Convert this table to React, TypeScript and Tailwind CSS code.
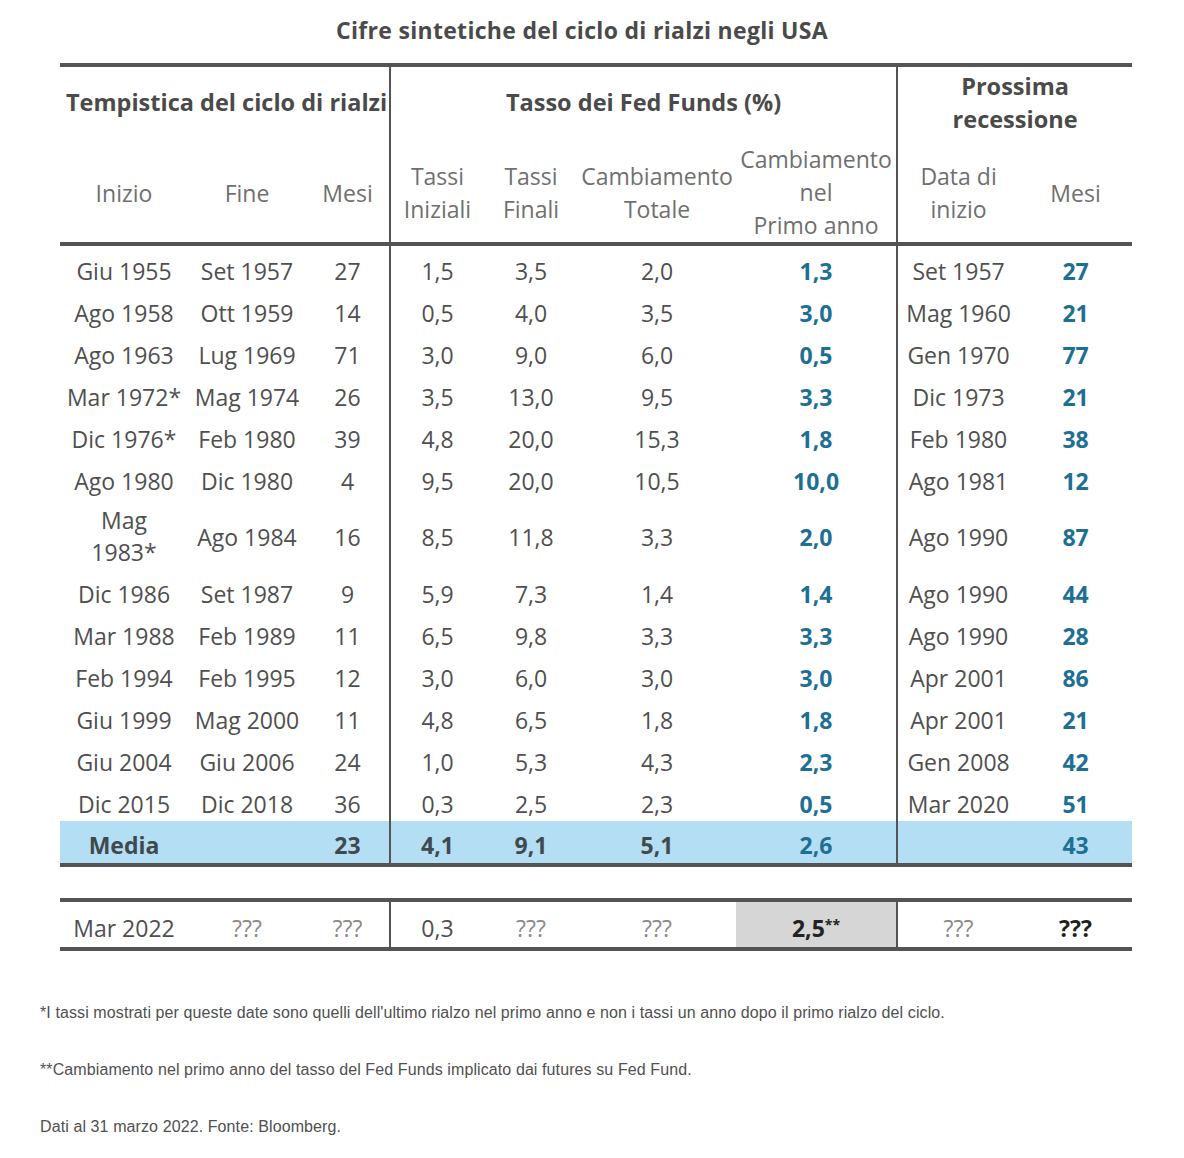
const rows = [
  ['Giu 1955', 'Set 1957', '27', '1,5', '3,5', '2,0', '1,3', 'Set 1957', '27'],
  ['Ago 1958', 'Ott 1959', '14', '0,5', '4,0', '3,5', '3,0', 'Mag 1960', '21'],
  ['Ago 1963', 'Lug 1969', '71', '3,0', '9,0', '6,0', '0,5', 'Gen 1970', '77'],
  ['Mar 1972*', 'Mag 1974', '26', '3,5', '13,0', '9,5', '3,3', 'Dic 1973', '21'],
  ['Dic 1976*', 'Feb 1980', '39', '4,8', '20,0', '15,3', '1,8', 'Feb 1980', '38'],
  ['Ago 1980', 'Dic 1980', '4', '9,5', '20,0', '10,5', '10,0', 'Ago 1981', '12'],
  ['Mag 1983*', 'Ago 1984', '16', '8,5', '11,8', '3,3', '2,0', 'Ago 1990', '87'],
  ['Dic 1986', 'Set 1987', '9', '5,9', '7,3', '1,4', '1,4', 'Ago 1990', '44'],
  ['Mar 1988', 'Feb 1989', '11', '6,5', '9,8', '3,3', '3,3', 'Ago 1990', '28'],
  ['Feb 1994', 'Feb 1995', '12', '3,0', '6,0', '3,0', '3,0', 'Apr 2001', '86'],
  ['Giu 1999', 'Mag 2000', '11', '4,8', '6,5', '1,8', '1,8', 'Apr 2001', '21'],
  ['Giu 2004', 'Giu 2006', '24', '1,0', '5,3', '4,3', '2,3', 'Gen 2008', '42'],
  ['Dic 2015', 'Dic 2018', '36', '0,3', '2,5', '2,3', '0,5', 'Mar 2020', '51'],
];

function Cols() {
  return (
    <colgroup>
      <col className="w-[128px]" />
      <col className="w-[118px]" />
      <col className="w-[84px]" />
      <col className="w-[94px]" />
      <col className="w-[94px]" />
      <col className="w-[158px]" />
      <col className="w-[161px]" />
      <col className="w-[122px]" />
      <col className="w-[113px]" />
    </colgroup>
  );
}

export default function App() {
  const head = 'p-0 pb-[2px] text-[23.5px] font-bold text-[#4a4a4a]';
  const sub = 'text-[#6f6f6f] font-normal leading-[33px] align-middle p-0 pt-[3px]';
  const cell = 'p-0 pt-[9px] text-center align-middle leading-[32px]';

  return (
    <div className="w-[1184px] min-h-[1158px] bg-white font-['Open_Sans',sans-serif] text-[#4f4f4f]">
      <h1 className="pt-[15px] pr-[20px] text-center text-[23px] font-bold leading-[30px] tracking-[0.3px] text-[#4a4a4a]">
        Cifre sintetiche del ciclo di rialzi negli USA
      </h1>

      <table className="ml-[60px] mt-[18px] w-[1072px] table-fixed border-collapse text-[23px]">
        <Cols />
        <thead>
          <tr className="h-[76px] border-t-[4px] border-[#545454]">
            <th colSpan={3} className={`${head} border-r-2 border-[#545454] pl-[6px] text-left whitespace-nowrap`}>
              Tempistica del ciclo di rialzi
            </th>
            <th colSpan={4} className={`${head} border-r-2 border-[#545454] text-center`}>
              Tasso dei Fed Funds (%)
            </th>
            <th colSpan={2} className={`${head} text-center leading-[33px]`}>
              Prossima
              <br />
              recessione
            </th>
          </tr>
          <tr className="h-[101px] border-b-[4px] border-[#545454]">
            <th className={sub}>Inizio</th>
            <th className={sub}>Fine</th>
            <th className={`${sub} border-r-2 border-[#545454]`}>Mesi</th>
            <th className={sub}>
              Tassi
              <br />
              Iniziali
            </th>
            <th className={sub}>
              Tassi
              <br />
              Finali
            </th>
            <th className={sub}>
              Cambiamento
              <br />
              Totale
            </th>
            <th className={`${sub} !pt-[2px] border-r-2 border-[#545454] whitespace-nowrap`}>
              Cambiamento
              <br />
              nel
              <br />
              Primo anno
            </th>
            <th className={sub}>
              Data di
              <br />
              inizio
            </th>
            <th className={sub}>Mesi</th>
          </tr>
        </thead>
        <tbody>
          {rows.map((r) => {
            const tall = r[0] === 'Mag 1983*';
            return (
              <tr key={r[0]} className={tall ? 'h-[69px]' : 'h-[42.2px]'}>
                <td className={`${cell} ${tall ? 'px-[30px] !pt-[6px]' : 'whitespace-nowrap'}`}>{r[0]}</td>
                <td className={`${cell} whitespace-nowrap`}>{r[1]}</td>
                <td className={`${cell} border-r-2 border-[#545454]`}>{r[2]}</td>
                <td className={cell}>{r[3]}</td>
                <td className={cell}>{r[4]}</td>
                <td className={cell}>{r[5]}</td>
                <td className={`${cell} border-r-2 border-[#545454] font-bold text-[#1e6f94]`}>{r[6]}</td>
                <td className={`${cell} whitespace-nowrap`}>{r[7]}</td>
                <td className={`${cell} font-bold text-[#1e6f94]`}>{r[8]}</td>
              </tr>
            );
          })}
          <tr className="h-[44px] border-b-[4px] border-[#545454] bg-[#b4def4] font-bold text-[#3f4a4f]">
            <td className={`${cell} !pt-[5px]`}>Media</td>
            <td className={cell}></td>
            <td className={`${cell} !pt-[5px] border-r-2 border-[#545454]`}>23</td>
            <td className={`${cell} !pt-[5px]`}>4,1</td>
            <td className={`${cell} !pt-[5px]`}>9,1</td>
            <td className={`${cell} !pt-[5px]`}>5,1</td>
            <td className={`${cell} !pt-[5px] border-r-2 border-[#545454] text-[#1e6f94]`}>2,6</td>
            <td className={cell}></td>
            <td className={`${cell} !pt-[5px] text-[#1e6f94]`}>43</td>
          </tr>
        </tbody>
      </table>

      <table className="ml-[60px] mt-[31px] w-[1072px] table-fixed border-collapse text-[23px]">
        <Cols />
        <tbody>
          <tr className="h-[49px] border-y-[4px] border-[#545454]">
            <td className={`${cell} !pt-[7px]`}>Mar 2022</td>
            <td className={`${cell} !pt-[7px] text-[#8a8a8a]`}>???</td>
            <td className={`${cell} !pt-[7px] border-r-2 border-[#545454] text-[#8a8a8a]`}>???</td>
            <td className={`${cell} !pt-[7px]`}>0,3</td>
            <td className={`${cell} !pt-[7px] text-[#8a8a8a]`}>???</td>
            <td className={`${cell} !pt-[7px] text-[#8a8a8a]`}>???</td>
            <td className={`${cell} !pt-[7px] border-r-2 border-[#545454] bg-[#d6d6d6] font-bold text-[#222]`}>
              2,5<sup className="text-[14px] font-bold">**</sup>
            </td>
            <td className={`${cell} !pt-[7px] text-[#8a8a8a]`}>???</td>
            <td className={`${cell} !pt-[7px] font-bold text-[#1f1f1f]`}>???</td>
          </tr>
        </tbody>
      </table>

      <div className="ml-[40px] mt-[53px] flex flex-col gap-[39px] font-['Liberation_Sans',sans-serif] text-[16px] leading-[18px] tracking-[0.1px] text-[#505050]">
        <p>*I tassi mostrati per queste date sono quelli dell'ultimo rialzo nel primo anno e non i tassi un anno dopo il primo rialzo del ciclo.</p>
        <p>**Cambiamento nel primo anno del tasso del Fed Funds implicato dai futures su Fed Fund.</p>
        <p>Dati al 31 marzo 2022. Fonte: Bloomberg.</p>
      </div>
    </div>
  );
}
